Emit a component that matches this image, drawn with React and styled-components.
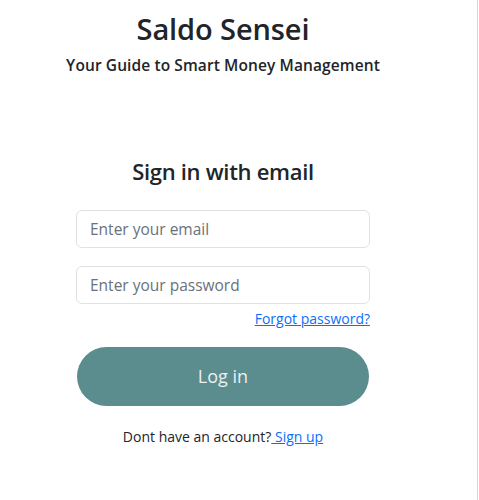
import React from "react";
import styled, { createGlobalStyle } from "styled-components";

const Global = createGlobalStyle`
  html, body { margin: 0; padding: 0; background: #fff; }
  body { font-family: "Open Sans", "Noto Sans", sans-serif; color: #212529; }
  * { box-sizing: border-box; }
`;

const Page = styled.div`
  width: 478px;
  height: 500px;
  border-right: 1px solid #d6d6d6;
  display: flex;
`;

const Column = styled.main`
  width: 446px;
  display: flex;
  flex-direction: column;
  align-items: center;
`;

const Title = styled.h1`
  margin: 12px 0 0;
  font-size: 29px;
  font-weight: 600;
  line-height: 1.2;
  letter-spacing: -0.1px;
`;

const Tagline = styled.h6`
  margin: 9px 0 0;
  font-size: 15.5px;
  font-weight: 600;
  line-height: 1.2;
  letter-spacing: 0.1px;
`;

const Heading = styled.h3`
  margin: 84px 0 0;
  font-size: 22px;
  font-weight: 600;
  line-height: 1.2;
  letter-spacing: -0.3px;
`;

const Form = styled.form`
  width: 294px;
  margin-top: 25px;
  display: flex;
  flex-direction: column;
`;

const Input = styled.input`
  width: 100%;
  height: 38px;
  padding: 6px 13px;
  font-family: inherit;
  font-size: 15.5px;
  color: #212529;
  border: 1px solid #dee2e6;
  border-radius: 6px;
  outline: none;
  & + & { margin-top: 18px; }
  &::placeholder { color: #6a717a; }
`;

const ForgotRow = styled.div`
  display: flex;
  justify-content: flex-end;
  margin-top: 6px;
`;

const Link = styled.a`
  color: #0d6efd;
  text-decoration: underline;
  font-size: 14px;
  line-height: 18px;
  cursor: pointer;
`;

const Button = styled.button`
  margin: 19px 1px 0;
  height: 59px;
  border: none;
  border-radius: 30px;
  background: #5b8c8e;
  color: #e9f1f1;
  font-family: inherit;
  font-size: 18px;
  font-weight: 400;
  cursor: pointer;
`;

const Footer = styled.p`
  margin: 22px 0 0;
  font-size: 14px;
  line-height: 18px;
  text-align: center;
`;

export default function App() {
  return (
    <>
      <Global />
      <Page>
        <Column>
          <Title>Saldo Sensei</Title>
          <Tagline>Your Guide to Smart Money Management</Tagline>
          <Heading>Sign in with email</Heading>
          <Form onSubmit={(e) => e.preventDefault()}>
            <Input type="email" placeholder="Enter your email" />
            <Input type="password" placeholder="Enter your password" />
            <ForgotRow>
              <Link href="#">Forgot password?</Link>
            </ForgotRow>
            <Button type="submit">Log in</Button>
          </Form>
          <Footer>
            Dont have an account?<Link href="#"> Sign up</Link>
          </Footer>
        </Column>
      </Page>
    </>
  );
}
